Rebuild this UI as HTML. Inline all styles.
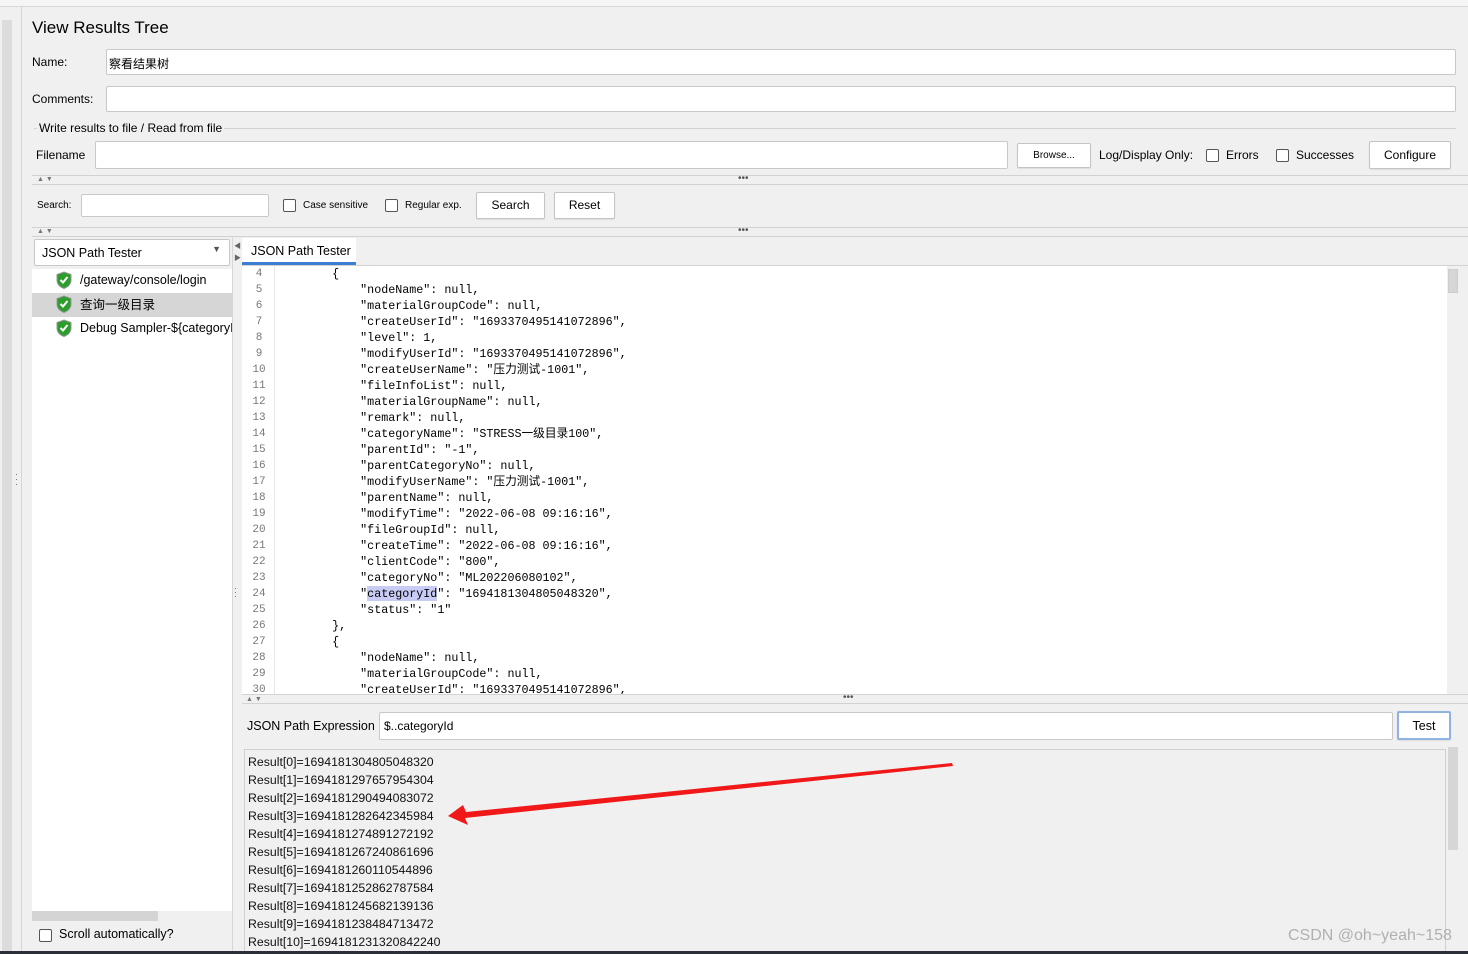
<!DOCTYPE html>
<html><head><meta charset="utf-8"><style>
*{box-sizing:border-box;margin:0;padding:0}
body{width:1468px;height:954px;background:#f0f0f0;font-family:"Liberation Sans","Noto Sans CJK SC",sans-serif;font-size:12px;color:#000;position:relative;overflow:hidden}
.a{position:absolute}
.inp{position:absolute;background:#fff;border:1px solid #c8c8c8;border-radius:2px}
.btn{position:absolute;background:#fff;border:1px solid #c4c4c4;border-radius:2px;text-align:center;box-shadow:0 1px 1px #ddd}
.cb{position:absolute;width:13px;height:13px;border:1px solid #555;border-radius:2px;background:#fff}
.hl{position:absolute;height:1px;background:#d2d2d2}
.code{position:absolute;left:276px;top:266px;font-family:"Liberation Mono","Noto Sans CJK SC",monospace;font-size:11.7px;line-height:16px;white-space:pre;color:#000}
.ln{position:absolute;left:244px;top:266px;width:30px;text-align:center;font-family:"Liberation Mono",monospace;font-size:11px;line-height:16px;color:#777;white-space:pre}
.res{position:absolute;left:248px;top:753px;font-size:12.3px;line-height:18px;color:#111;white-space:nowrap}
.ar{font-size:7px;color:#777;letter-spacing:2px}
</style></head><body>
<div class="a" style="left:0;top:0;width:1468px;height:7px;background:#f5f5f5;border-bottom:1px solid #d8d8d8"></div>
<div class="a" style="left:2px;top:20px;width:10px;height:934px;background:#dcdcdc"></div>
<div class="a" style="left:21px;top:7px;width:1px;height:947px;background:#d6d6d6"></div>
<div class="a" style="left:15px;top:472px;font-size:9px;color:#666;line-height:5px">·<br>·<br>·</div>

<div class="a" style="left:32px;top:18px;font-size:17px">View Results Tree</div>
<div class="a" style="left:32px;top:55px">Name:</div>
<div class="inp" style="left:106px;top:49px;width:1350px;height:26px;padding:5px 2px">察看结果树</div>
<div class="a" style="left:32px;top:92px">Comments:</div>
<div class="inp" style="left:106px;top:86px;width:1350px;height:26px"></div>
<div class="hl" style="left:34px;top:128px;width:1422px"></div>
<div class="a" style="left:37px;top:121px;background:#f0f0f0;padding:0 2px">Write results to file / Read from file</div>
<div class="a" style="left:36px;top:148px">Filename</div>
<div class="inp" style="left:95px;top:141px;width:913px;height:28px"></div>
<div class="btn" style="left:1017px;top:143px;width:74px;height:25px;font-size:10px;line-height:23px">Browse...</div>
<div class="a" style="left:1099px;top:148px">Log/Display Only:</div>
<div class="cb" style="left:1206px;top:149px"></div>
<div class="a" style="left:1226px;top:148px">Errors</div>
<div class="cb" style="left:1276px;top:149px"></div>
<div class="a" style="left:1296px;top:148px">Successes</div>
<div class="btn" style="left:1369px;top:141px;width:82px;height:28px;line-height:26px">Configure</div>

<div class="hl" style="left:32px;top:175px;width:1436px"></div>
<div class="hl" style="left:32px;top:184px;width:1436px"></div>
<div class="a ar" style="left:37px;top:176px">▲▼</div>
<div class="a" style="left:738px;top:173px;font-size:10px;color:#555">•••</div>
<div class="a" style="left:37px;top:200px;font-size:10px">Search:</div>
<div class="inp" style="left:81px;top:194px;width:188px;height:23px"></div>
<div class="cb" style="left:283px;top:199px"></div>
<div class="a" style="left:303px;top:200px;font-size:10px">Case sensitive</div>
<div class="cb" style="left:385px;top:199px"></div>
<div class="a" style="left:405px;top:200px;font-size:10px">Regular exp.</div>
<div class="btn" style="left:476px;top:192px;width:69px;height:27px;line-height:25px">Search</div>
<div class="btn" style="left:554px;top:192px;width:61px;height:27px;line-height:25px">Reset</div>
<div class="hl" style="left:32px;top:227px;width:1436px"></div>
<div class="hl" style="left:32px;top:236px;width:1436px"></div>
<div class="a ar" style="left:37px;top:228px">▲▼</div>
<div class="a" style="left:738px;top:225px;font-size:10px;color:#555">•••</div>

<!-- left tree -->
<div class="inp" style="left:34px;top:239px;width:196px;height:27px;padding:6px 7px;font-size:12.5px">JSON Path Tester<span style="position:absolute;right:8px;top:4px;font-size:9px;color:#555">▼</span></div>
<div class="a" style="left:32px;top:269px;width:200px;height:642px;background:#fff"></div>
<div class="a" style="left:32px;top:293px;width:200px;height:24px;background:#d6d6d6"></div>
<svg class="a" style="left:55px;top:271px" width="18" height="68" viewBox="0 0 18 68">
<g><path d="M9 1L16 3.5V9C16 13 13 16 9 17.5C5 16 2 13 2 9V3.5Z" fill="#2a9d2a" stroke="#999"/><path d="M5.5 9L8 11.5L12.5 6" stroke="#fff" stroke-width="2" fill="none"/></g>
<g transform="translate(0,24)"><path d="M9 1L16 3.5V9C16 13 13 16 9 17.5C5 16 2 13 2 9V3.5Z" fill="#2a9d2a" stroke="#999"/><path d="M5.5 9L8 11.5L12.5 6" stroke="#fff" stroke-width="2" fill="none"/></g>
<g transform="translate(0,48)"><path d="M9 1L16 3.5V9C16 13 13 16 9 17.5C5 16 2 13 2 9V3.5Z" fill="#2a9d2a" stroke="#999"/><path d="M5.5 9L8 11.5L12.5 6" stroke="#fff" stroke-width="2" fill="none"/></g>
</svg>
<div class="a" style="left:80px;top:273px;font-size:12.5px">/gateway/console/login</div>
<div class="a" style="left:80px;top:297px;font-size:12.5px;line-height:16px">查询一级目录</div>
<div class="a" style="left:80px;top:321px;font-size:12.5px;width:152px;overflow:hidden;white-space:nowrap">Debug Sampler-${categoryId}</div>
<div class="a" style="left:32px;top:911px;width:126px;height:10px;background:#d4d4d4"></div>
<div class="cb" style="left:39px;top:929px"></div>
<div class="a" style="left:59px;top:927px;font-size:12.5px">Scroll automatically?</div>
<div class="a" style="left:232px;top:236px;width:1px;height:718px;background:#d6d6d6"></div>
<div class="a" style="left:234px;top:241px;font-size:7px;color:#666;line-height:12px">◀<br>▶</div>
<div class="a" style="left:234px;top:586px;font-size:9px;color:#666;line-height:4px">·<br>·<br>·</div>

<!-- right -->
<div class="a" style="left:242px;top:238px;width:114px;height:27px;background:#fff;border-bottom:3px solid #3c7fd0;padding:6px 9px;font-size:12.5px;white-space:nowrap">JSON Path Tester</div>
<div class="hl" style="left:242px;top:265px;width:1226px"></div>
<div class="a" style="left:242px;top:266px;width:1205px;height:428px;background:#fff"></div>
<div class="a" style="left:274px;top:266px;width:1px;height:428px;background:#e6e6e6"></div>
<div class="a" style="left:1448px;top:269px;width:10px;height:24px;background:#d6d6d6;border:1px solid #ccc"></div>
<div class="ln">4
5
6
7
8
9
10
11
12
13
14
15
16
17
18
19
20
21
22
23
24
25
26
27
28
29
30</div>
<div class="a" style="left:367px;top:586px;width:70px;height:15px;background:#c8ccf5"></div>
<div class="code">        {
            "nodeName": null,
            "materialGroupCode": null,
            "createUserId": "1693370495141072896",
            "level": 1,
            "modifyUserId": "1693370495141072896",
            "createUserName": "压力测试-1001",
            "fileInfoList": null,
            "materialGroupName": null,
            "remark": null,
            "categoryName": "STRESS一级目录100",
            "parentId": "-1",
            "parentCategoryNo": null,
            "modifyUserName": "压力测试-1001",
            "parentName": null,
            "modifyTime": "2022-06-08 09:16:16",
            "fileGroupId": null,
            "createTime": "2022-06-08 09:16:16",
            "clientCode": "800",
            "categoryNo": "ML202206080102",
            "categoryId": "1694181304805048320",
            "status": "1"
        },
        {
            "nodeName": null,
            "materialGroupCode": null,
            "createUserId": "1693370495141072896",</div>
<div class="hl" style="left:242px;top:694px;width:1226px"></div>
<div class="hl" style="left:242px;top:703px;width:1226px"></div>
<div class="a ar" style="left:246px;top:696px">▲▼</div>
<div class="a" style="left:843px;top:692px;font-size:10px;color:#555">•••</div>
<div class="a" style="left:247px;top:719px;font-size:12.5px">JSON Path Expression</div>
<div class="inp" style="left:379px;top:712px;width:1014px;height:28px;padding:6px 4px">$..categoryId</div>
<div class="btn" style="left:1397px;top:711px;width:54px;height:29px;line-height:27px;border:2px solid #8fb3e0;font-size:12.5px">Test</div>
<div class="a" style="left:244px;top:749px;width:1202px;height:205px;border:1px solid #d0d0d0;border-bottom:none"></div>
<div class="a" style="left:1448px;top:747px;width:10px;height:103px;background:#d6d6d6"></div>
<div class="res">Result[0]=1694181304805048320<br>Result[1]=1694181297657954304<br>Result[2]=1694181290494083072<br>Result[3]=1694181282642345984<br>Result[4]=1694181274891272192<br>Result[5]=1694181267240861696<br>Result[6]=1694181260110544896<br>Result[7]=1694181252862787584<br>Result[8]=1694181245682139136<br>Result[9]=1694181238484713472<br>Result[10]=1694181231320842240</div>
<svg class="a" style="left:0;top:0" width="1468" height="954"><polygon points="952,763 953,766 465,818 468,825 448,816 463,805 466,812" fill="#f01818"/></svg>
<div class="a" style="left:1288px;top:927px;font-size:16px;color:#b0b0b0">CSDN @oh~yeah~158</div>
<div class="a" style="left:0;top:951px;width:1468px;height:3px;background:#2a2f38"></div>
</body></html>
